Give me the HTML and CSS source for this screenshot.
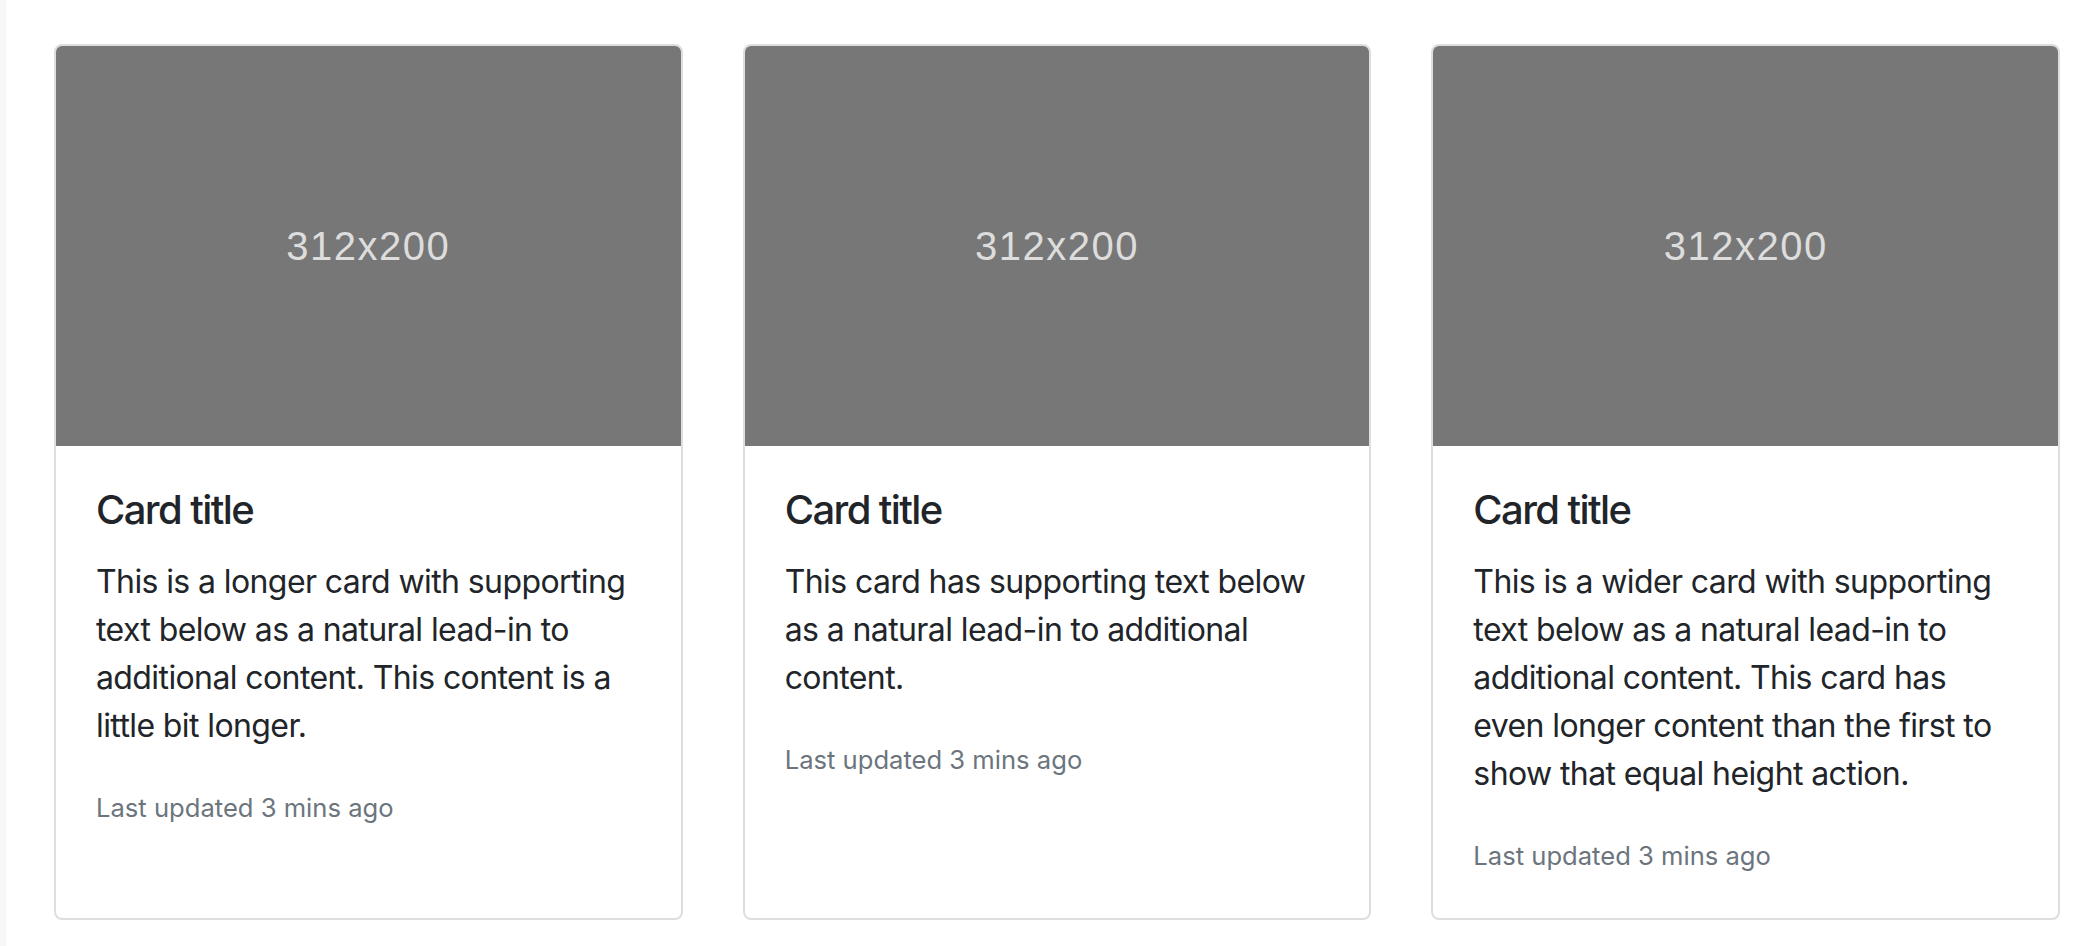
FILE: index.html
```html
<!DOCTYPE html>
<html lang="en">
<head>
<meta charset="utf-8">
<title>Card deck</title>
<link rel="stylesheet" href="styles.css">
</head>
<body>
<div class="page">
  <div class="strip"></div>
  <main class="content">
    <div class="deck">
      <div class="card">
        <div class="card-img"><span class="img-label">312x200</span></div>
        <div class="card-body">
          <h5 class="card-title">Card title</h5>
          <p class="card-text">This is a longer card with supporting text below as a natural lead-in to additional content. This content is a little bit longer.</p>
          <p class="card-meta"><small class="muted">Last updated 3 mins ago</small></p>
        </div>
      </div>
      <div class="card">
        <div class="card-img"><span class="img-label">312x200</span></div>
        <div class="card-body">
          <h5 class="card-title">Card title</h5>
          <p class="card-text">This card has supporting text below as a natural lead-in to additional content.</p>
          <p class="card-meta"><small class="muted">Last updated 3 mins ago</small></p>
        </div>
      </div>
      <div class="card">
        <div class="card-img"><span class="img-label">312x200</span></div>
        <div class="card-body">
          <h5 class="card-title">Card title</h5>
          <p class="card-text">This is a wider card with supporting text below as a natural lead-in to additional content. This card has even longer content than the first to show that equal height action.</p>
          <p class="card-meta"><small class="muted">Last updated 3 mins ago</small></p>
        </div>
      </div>
    </div>
  </main>
</div>
</body>
</html>
```

FILE: styles.css
```css
* { box-sizing: border-box; }

html, body {
  margin: 0;
  padding: 0;
  background: #ffffff;
}

body {
  font-family: "Inter", "Roboto", "Liberation Sans", sans-serif;
  font-size: 32px;
  line-height: 1.5;
  color: #212529;
}

.page {
  display: flex;
  min-height: 946px;
}

.strip {
  width: 6px;
  flex: 0 0 6px;
  background: #f6f7f9;
}

.content {
  flex: 1;
  padding: 44px 40px 0 48px;
}

.deck {
  display: flex;
  gap: 60px;
  align-items: stretch;
}

.card {
  flex: 1 1 0;
  display: flex;
  flex-direction: column;
  border: 2px solid #dedede;
  border-radius: 8px;
  overflow: hidden;
  background: #fff;
}

.card-img {
  height: 400px;
  background: #777777;
  display: flex;
  align-items: center;
  justify-content: center;
}

.img-label {
  font-family: "Liberation Sans", Arial, sans-serif;
  font-size: 40px;
  letter-spacing: 1.5px;
  color: #dddddd;
  line-height: 1;
}

.card-body {
  padding: 40px;
  flex: 1;
}

.card-title {
  margin: 0 0 24px;
  font-size: 40px;
  font-weight: 500;
  line-height: 1.2;
  letter-spacing: -1.6px;
}

.card-text {
  margin: 0 0 32px;
  letter-spacing: -0.6px;
}

.card-meta {
  margin: 0;
}

.muted {
  font-size: 80%;
  color: #6c757d;
}
```
